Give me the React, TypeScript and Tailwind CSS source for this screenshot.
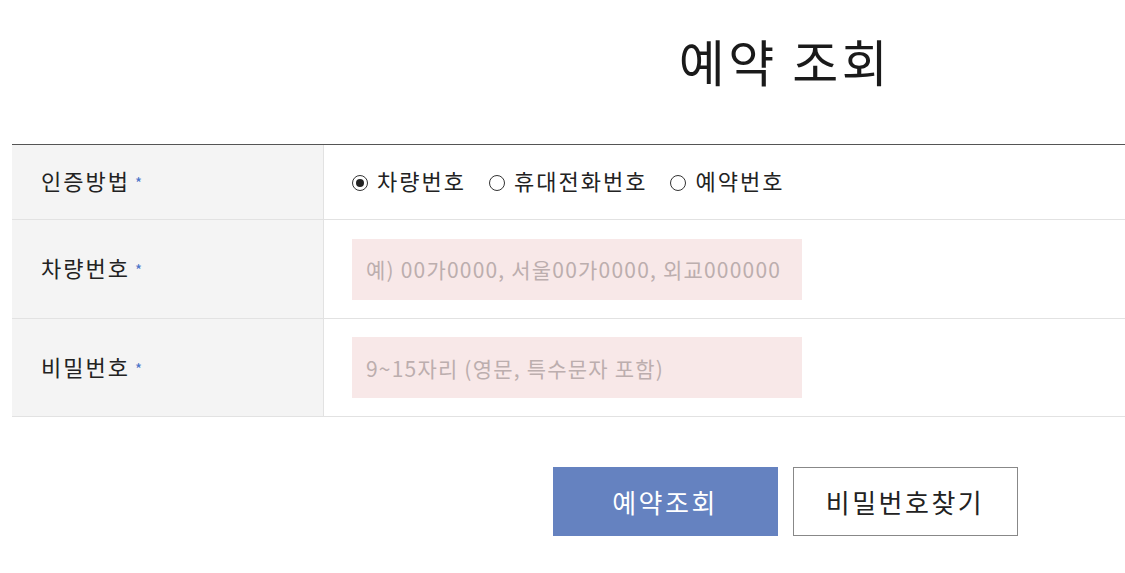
import React, { useState } from 'react';

const FONT = "font-['Noto_Sans_CJK_KR','Noto_Sans',sans-serif]";

const Label: React.FC<{ text: string }> = ({ text }) => (
  <div className="w-[312px] shrink-0 bg-[#f4f4f4] border-r border-[#e2e2e2] flex items-center pl-[29px] pb-[3px] text-[22px] tracking-[2px] text-[#222]">
    <span>{text}</span>
    <span className="ml-[5px] text-[15px] text-[#4a72c8] translate-y-[3px]">*</span>
  </div>
);

const Radio: React.FC<{ label: string; checked: boolean; onClick: () => void }> = ({ label, checked, onClick }) => (
  <button onClick={onClick} className="flex items-center mr-[23px] text-[22px] tracking-[2px] text-[#222]">
    <span className="w-[16px] h-[16px] rounded-full border border-[#333] flex items-center justify-center mr-[9px] mt-[5px]">
      {checked && <span className="w-[8px] h-[8px] rounded-full bg-[#222]" />}
    </span>
    {label}
  </button>
);

export default function App() {
  const [method, setMethod] = useState('car');

  return (
    <div className={`w-[1125px] h-[573px] overflow-hidden bg-white ${FONT}`}>
      <div className="ml-[12px] w-[1546px]">
        <h2 className="text-center text-[50px] leading-none text-[#1a1a1a] pt-[35px] pb-[59px] tracking-[3.5px]">
          예약 조회
        </h2>

        <div className="border-t border-[#555]">
          {/* 인증방법 */}
          <div className="flex h-[75px] border-b border-[#e2e2e2]">
            <Label text="인증방법" />
            <div className="flex items-center pl-[28px] pb-[3px]">
              <Radio label="차량번호" checked={method === 'car'} onClick={() => setMethod('car')} />
              <Radio label="휴대전화번호" checked={method === 'phone'} onClick={() => setMethod('phone')} />
              <Radio label="예약번호" checked={method === 'rsv'} onClick={() => setMethod('rsv')} />
            </div>
          </div>

          {/* 차량번호 */}
          <div className="flex h-[99px] border-b border-[#e2e2e2]">
            <Label text="차량번호" />
            <div className="flex items-center pl-[28px]">
              <input
                className="w-[450px] h-[61px] bg-[#f8e8e8] px-[14px] text-[21px] tracking-[1.2px] outline-none placeholder:text-[#bcaeae]"
                placeholder="예) 00가0000, 서울00가0000, 외교000000"
              />
            </div>
          </div>

          {/* 비밀번호 */}
          <div className="flex h-[98px] border-b border-[#e2e2e2]">
            <Label text="비밀번호" />
            <div className="flex items-center pl-[28px]">
              <input
                type="password"
                className="w-[450px] h-[61px] bg-[#f8e8e8] px-[14px] text-[21px] tracking-[1.2px] outline-none placeholder:text-[#bcaeae]"
                placeholder="9~15자리 (영문, 특수문자 포함)"
              />
            </div>
          </div>
        </div>

        <div className="flex justify-center gap-[15px] mt-[50px]">
          <button className="w-[225px] h-[69px] bg-[#6582c0] text-white text-[26px] tracking-[2.5px]">예약조회</button>
          <button className="w-[225px] h-[69px] bg-white border border-[#888] text-[#222] text-[26px] tracking-[2.5px]">비밀번호찾기</button>
        </div>
      </div>
    </div>
  );
}
